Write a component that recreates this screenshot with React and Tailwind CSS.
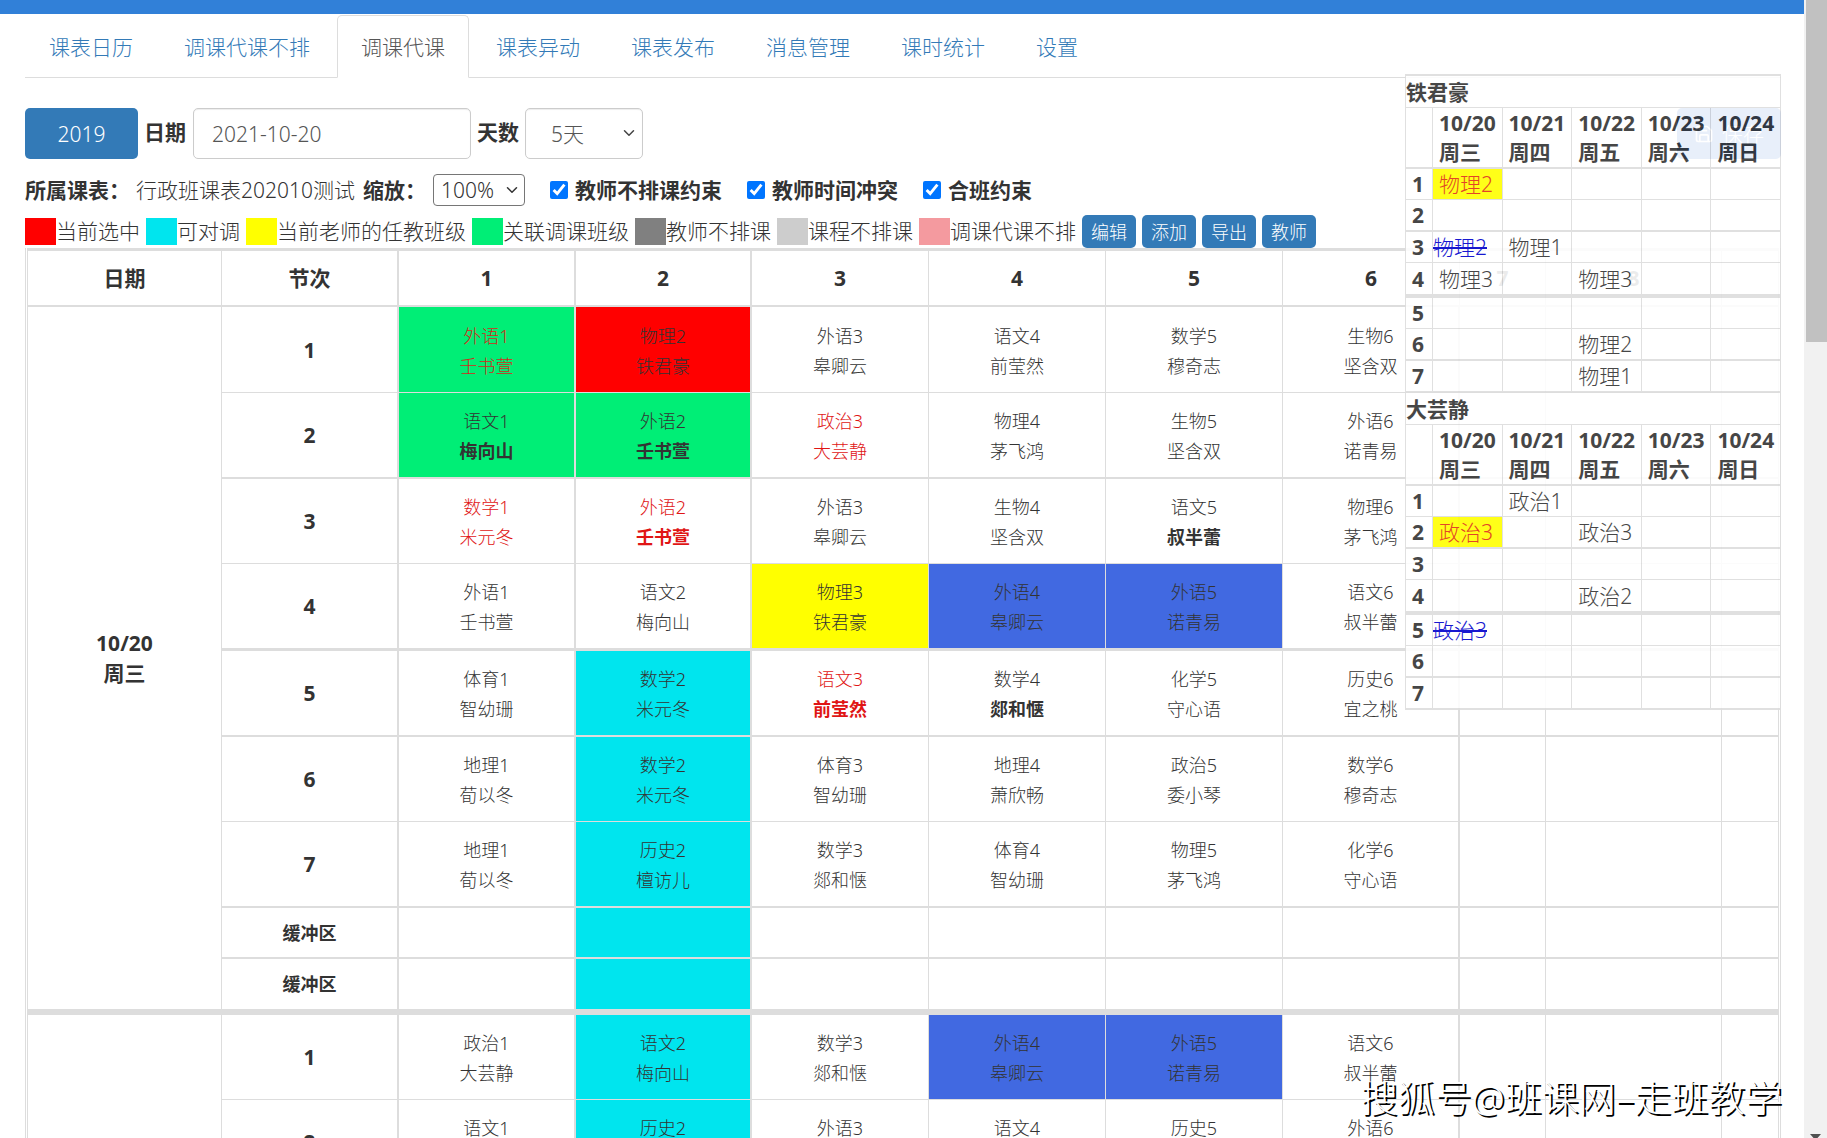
import React, { useState } from 'react';
import { ChevronDown, Save } from 'lucide-react';
import clsx from 'clsx';

const tabs = ['课表日历', '调课代课不排', '调课代课', '课表异动', '课表发布', '消息管理', '课时统计', '设置'];

const legend = [
  { label: '当前选中', color: 'bg-[#ff0000]' },
  { label: '可对调', color: 'bg-[#00e5ee]' },
  { label: '当前老师的任教班级', color: 'bg-[#ffff00]' },
  { label: '关联调课班级', color: 'bg-[#00ee76]' },
  { label: '教师不排课', color: 'bg-[#808080]' },
  { label: '课程不排课', color: 'bg-[#cdcdcd]' },
  { label: '调课代课不排', color: 'bg-[#f49a9f]' },
];

const tones = {
  green: 'bg-[#00ee76]',
  red: 'bg-[#ff0000]',
  yellow: 'bg-[#ffff00]',
  cyan: 'bg-[#00e5ee]',
  blue: 'bg-[#4169e1]',
};

// one lesson: [course, teacher, background, flags] - flags: r = red text, b = bold teacher
const days = [
  {
    date: '10/20',
    week: '周三',
    rows: [
      { no: '1', size: 'h-[86px]', line: 'border-b', cells: [['外语1', '壬书萱', 'green', 'r'], ['物理2', '铁君豪', 'red'], ['外语3', '皋卿云'], ['语文4', '前莹然'], ['数学5', '穆奇志'], ['生物6', '坚含双']] },
      { no: '2', size: 'h-[86px]', line: 'border-b-2', cells: [['语文1', '梅向山', 'green', 'b'], ['外语2', '壬书萱', 'green', 'b'], ['政治3', '大芸静', '', 'r'], ['物理4', '茅飞鸿'], ['生物5', '坚含双'], ['外语6', '诺青易']] },
      { no: '3', size: 'h-[85px]', line: 'border-b', cells: [['数学1', '米元冬', '', 'r'], ['外语2', '壬书萱', '', 'rb'], ['外语3', '皋卿云'], ['生物4', '坚含双'], ['语文5', '叔半蕾', '', 'b'], ['物理6', '茅飞鸿']] },
      { no: '4', size: 'h-[87px]', line: 'border-b-3', cells: [['外语1', '壬书萱'], ['语文2', '梅向山'], ['物理3', '铁君豪', 'yellow'], ['外语4', '皋卿云', 'blue'], ['外语5', '诺青易', 'blue'], ['语文6', '叔半蕾']] },
      { no: '5', size: 'h-[86px]', line: 'border-b-2', cells: [['体育1', '智幼珊'], ['数学2', '米元冬', 'cyan'], ['语文3', '前莹然', '', 'rb'], ['数学4', '郯和惬', '', 'b'], ['化学5', '守心语'], ['历史6', '宜之桃']] },
      { no: '6', size: 'h-[85px]', line: 'border-b', cells: [['地理1', '荀以冬'], ['数学2', '米元冬', 'cyan'], ['体育3', '智幼珊'], ['地理4', '萧欣畅'], ['政治5', '委小琴'], ['数学6', '穆奇志']] },
      { no: '7', size: 'h-[86px]', line: 'border-b-2', cells: [['地理1', '荀以冬'], ['历史2', '檀访儿', 'cyan'], ['数学3', '郯和惬'], ['体育4', '智幼珊'], ['物理5', '茅飞鸿'], ['化学6', '守心语']] },
      { no: '缓冲区', size: 'h-[51px]', line: 'border-b-2', cells: [[], ['', '', 'cyan'], [], [], [], []] },
      { no: '缓冲区', size: 'h-[56px]', line: 'border-b-6', cells: [[], ['', '', 'cyan'], [], [], [], []] },
    ],
  },
  {
    date: '10/21',
    week: '周四',
    rows: [
      { no: '1', size: 'h-[85px]', line: 'border-b', cells: [['政治1', '大芸静'], ['语文2', '梅向山', 'cyan'], ['数学3', '郯和惬'], ['外语4', '皋卿云', 'blue'], ['外语5', '诺青易', 'blue'], ['语文6', '叔半蕾']] },
      { no: '2', size: 'h-[86px]', line: 'border-b-2', cells: [['语文1', '梅向山'], ['历史2', '檀访儿', 'cyan'], ['外语3', '皋卿云'], ['语文4', '前莹然'], ['历史5', '宜之桃'], ['外语6', '诺青易']] },
      { no: '3', size: 'h-[85px]', line: 'border-b', cells: [[], [], [], [], [], []] },
      { no: '4', size: 'h-[87px]', line: 'border-b-3', cells: [[], [], [], [], [], []] },
    ],
  },
];

const columns = ['1', '2', '3', '4', '5', '6', '7', '8', ''];

const panelDays = [
  ['10/20', '周三'],
  ['10/21', '周四'],
  ['10/22', '周五'],
  ['10/23', '周六'],
  ['10/24', '周日'],
];

const panelRows = [
  { no: '1', size: 'h-[31px]', line: 'border-b' },
  { no: '2', size: 'h-[32px]', line: 'border-b-2' },
  { no: '3', size: 'h-[31px]', line: 'border-b' },
  { no: '4', size: 'h-[35px]', line: 'border-b-4' },
  { no: '5', size: 'h-[31px]', line: 'border-b' },
  { no: '6', size: 'h-[32px]', line: 'border-b-2' },
  { no: '7', size: 'h-[32px]', line: 'border-b-2' },
];

// lessons keyed by "row-dayIndex"
const teachers = [
  {
    name: '铁君豪',
    lessons: {
      '1-0': { text: '物理2', kind: 'current' },
      '3-0': { text: '物理2', kind: 'moved' },
      '3-1': { text: '物理1' },
      '4-0': { text: '物理3' },
      '4-2': { text: '物理3' },
      '6-2': { text: '物理2' },
      '7-2': { text: '物理1' },
    },
  },
  {
    name: '大芸静',
    lessons: {
      '1-1': { text: '政治1' },
      '2-0': { text: '政治3', kind: 'current' },
      '2-2': { text: '政治3' },
      '4-2': { text: '政治2' },
      '5-0': { text: '政治3', kind: 'moved' },
    },
  },
];

const TabBar = () => (
  <nav className="flex items-end gap-[3px] border-b border-[#ddd]">
    {tabs.map((tab) => (
      <a
        key={tab}
        href="#"
        className={clsx(
          '-mb-px h-[63px] rounded-t-[5px] border px-[23px] pt-4 leading-[30px]',
          tab === '调课代课' ? 'border-[#ddd] border-b-white bg-white text-[#555]' : 'border-transparent text-[#337ab7]'
        )}
      >
        {tab}
      </a>
    ))}
  </nav>
);

const FilterBar = () => {
  const [date, setDate] = useState('2021-10-20');

  return (
    <div className="mt-[30px] flex items-center">
      <button className="h-[51px] w-[113px] rounded-[5px] bg-[#337ab7] text-white">2019</button>
      <label htmlFor="date" className="ml-[6px] pb-1 font-bold">日期</label>
      <input
        id="date"
        value={date}
        onChange={(e) => setDate(e.target.value)}
        className="ml-[7px] h-[51px] w-[278px] rounded-[5px] border border-[#ccc] px-[18px] text-[#555] shadow-[inset_0_1px_1px_rgba(0,0,0,0.075)]"
      />
      <label htmlFor="dayCount" className="ml-[6px] pb-1 font-bold">天数</label>
      <div className="relative ml-[6px]">
        <select
          id="dayCount"
          className="h-[51px] w-[118px] appearance-none rounded-[5px] border border-[#ccc] bg-white px-[25px] text-[#555] shadow-[inset_0_1px_1px_rgba(0,0,0,0.075)]"
        >
          <option>5天</option>
          <option>7天</option>
        </select>
        <ChevronDown className="pointer-events-none absolute top-[16px] right-[5px] h-[18px] w-[18px] text-[#444]" />
      </div>
      <button className="ml-auto flex h-[51px] w-[104px] items-center justify-center gap-2 rounded-[5px] bg-[#1b5fd0] text-white">
        <Save className="h-5 w-5" />
        保存
      </button>
    </div>
  );
};

const Constraint = ({ label }) => (
  <label className="ml-[25px] flex items-center gap-[7px] font-bold">
    <input type="checkbox" defaultChecked className="h-[18px] w-[18px] accent-[#0075ff]" />
    {label}
  </label>
);

const OptionBar = () => (
  <div className="mt-[14px] flex h-[34px] items-center">
    <span className="font-bold">所属课表：</span>
    <span className="ml-[6px]">行政班课表202010测试</span>
    <label htmlFor="zoom" className="ml-[8px] font-bold">缩放：</label>
    <div className="relative ml-[7px]">
      <select
        id="zoom"
        className="block h-8 w-[92px] appearance-none rounded-[4px] border border-[#767676] bg-white pl-[7px] leading-7"
      >
        <option>100%</option>
        <option>80%</option>
      </select>
      <ChevronDown className="pointer-events-none absolute top-[7px] right-[4px] h-[18px] w-[18px]" />
    </div>
    <Constraint label="教师不排课约束" />
    <Constraint label="教师时间冲突" />
    <Constraint label="合班约束" />
  </div>
);

const LegendBar = () => (
  <div className="mt-[8px] flex h-[33px] items-center gap-[6px]">
    {legend.map((item) => (
      <span key={item.label} className="flex h-[29px] items-center leading-[27px]">
        <span className={clsx('h-[27px] w-[31px]', item.color)} />
        {item.label}
      </span>
    ))}
    {['编辑', '添加', '导出', '教师'].map((text) => (
      <button key={text} className="h-[33px] w-[54px] rounded-[5px] bg-[#337ab7] text-[18px] text-white">
        {text}
      </button>
    ))}
  </div>
);

const Lesson = ({ data, line, edge = 'border-r' }) => {
  const [course = '', teacher = '', tone = '', flags = ''] = data;
  return (
    <td
      className={clsx(
        'border-[#ddd] bg-clip-padding pt-0.5 text-center text-[18px] leading-[30px]',
        edge,
        line,
        tones[tone],
        flags.includes('r') && (tone ? 'text-[#d02a1a]' : 'text-[#e01515]')
      )}
    >
      <div>{course}</div>
      <div className={clsx(flags.includes('b') && 'font-bold')}>{teacher}</div>
    </td>
  );
};

const Timetable = () => (
  <div className="border-x border-[#ddd] px-px">
    <table className="w-full table-fixed border-separate border-spacing-0 border-t-3 border-l border-[#ddd]">
      <colgroup>
        <col className="w-[194px]" />
        <col className="w-[177px]" />
        <col className="w-[177px]" />
        <col className="w-[176px]" />
        <col className="w-[177px]" />
        <col className="w-[177px]" />
        <col className="w-[177px]" />
        <col className="w-[177px]" />
        <col className="w-[86px]" />
        <col className="w-[176px]" />
        <col />
      </colgroup>
      <thead>
        <tr className="h-[56px]">
          <th className="border-r border-b-2 border-[#ddd]">日期</th>
          <th className="border-r-2 border-b-2 border-[#ddd]">节次</th>
          {columns.map((c, i) => (
            <th key={i} className={clsx('border-b-2 border-[#ddd]', i < 2 ? 'border-r-2' : 'border-r')}>{c}</th>
          ))}
        </tr>
      </thead>
      {days.map((day) => (
        <tbody key={day.date}>
          {day.rows.map((row, i) => (
            <tr key={i} className={row.size}>
              {i === 0 && (
                <th rowSpan={day.rows.length} className="border-r border-b-6 border-[#ddd] leading-[30px]">
                  <div>{day.date}</div>
                  <div>{day.week}</div>
                </th>
              )}
              <th className={clsx('border-r-2 border-[#ddd]', row.line, row.no === '缓冲区' && 'text-[18px]')}>{row.no}</th>
              {row.cells.map((cell, j) => (
                <Lesson key={j} data={cell} line={row.line} edge={j < 2 || j === 5 ? 'border-r-2' : 'border-r'} />
              ))}
              <Lesson data={[]} line={row.line} />
              <Lesson data={[]} line={row.line} />
              <Lesson data={[]} line={row.line} />
            </tr>
          ))}
        </tbody>
      ))}
    </table>
  </div>
);

const TeacherTable = ({ teacher }) => (
  <table className="w-full table-fixed border-separate border-spacing-0 text-left leading-[28px]">
    <colgroup>
      <col className="w-[27px]" />
      <col />
      <col />
      <col />
      <col />
      <col />
    </colgroup>
    <thead>
      <tr className="h-[32px]">
        <th colSpan={6} className="border-r border-b border-[#ddd]">{teacher.name}</th>
      </tr>
      <tr className="h-[61px]">
        <th className="border-r border-b-2 border-[#ddd]" />
        {panelDays.map(([date, week]) => (
          <th key={date} className="border-r border-b-2 border-[#ddd] pl-[6px] leading-[29px] whitespace-nowrap">
            <div>{date}</div>
            <div>{week}</div>
          </th>
        ))}
      </tr>
    </thead>
    <tbody>
      {panelRows.map((row) => (
        <tr key={row.no} className={row.size}>
          <th className={clsx('border-r border-[#ddd] pl-[6px]', row.line)}>{row.no}</th>
          {panelDays.map((d, i) => {
            const lesson = teacher.lessons[`${row.no}-${i}`];
            return (
              <td
                key={i}
                className={clsx(
                  'border-r border-[#ddd]',
                  row.line,
                  lesson?.kind === 'current' && 'bg-[#ffff00] text-[#e03010]',
                  lesson?.kind === 'moved' ? 'text-[#0000cc] line-through' : 'pl-[6px]'
                )}
              >
                {lesson?.text}
              </td>
            );
          })}
        </tr>
      ))}
    </tbody>
  </table>
);

const ScrollBar = () => (
  <div className="flex w-[23px] shrink-0 flex-col justify-between bg-[#f1f1f1] pl-[2px]">
    <div className="h-[342px] bg-[#c1c1c1]" />
    <svg viewBox="0 0 11 4" className="ml-[4px] h-[4px] w-[11px]" fill="#505050">
      <path d="M0 0h11L7.5 4h-4z" />
    </svg>
  </div>
);

const App = () => {
  return (
    <div className="flex h-screen overflow-hidden bg-white font-['Noto_Sans','Noto_Sans_CJK_SC',sans-serif] text-[21px] leading-[30px] font-light text-[#333]">
      <div className="relative min-w-0 flex-1">
        <header className="h-[14px] bg-[#3180d8]" />
        <main className="pt-px pr-[23px] pl-[25px]">
          <TabBar />
          <FilterBar />
          <OptionBar />
          <LegendBar />
          <Timetable />
        </main>

        {/* floating teacher schedules */}
        <aside className="absolute top-[74px] right-[23px] w-[376px] border-t-2 border-l border-[#ddd] bg-white opacity-90">
          {teachers.map((t) => (
            <TeacherTable key={t.name} teacher={t} />
          ))}
        </aside>

        <div className="absolute right-[22px] bottom-[15px] text-[37px] leading-[50px] whitespace-nowrap text-white [text-shadow:2px_2px_0_#000]">
          搜狐号@班课网–走班教学
        </div>
      </div>
      <ScrollBar />
    </div>
  );
};

export default App;
